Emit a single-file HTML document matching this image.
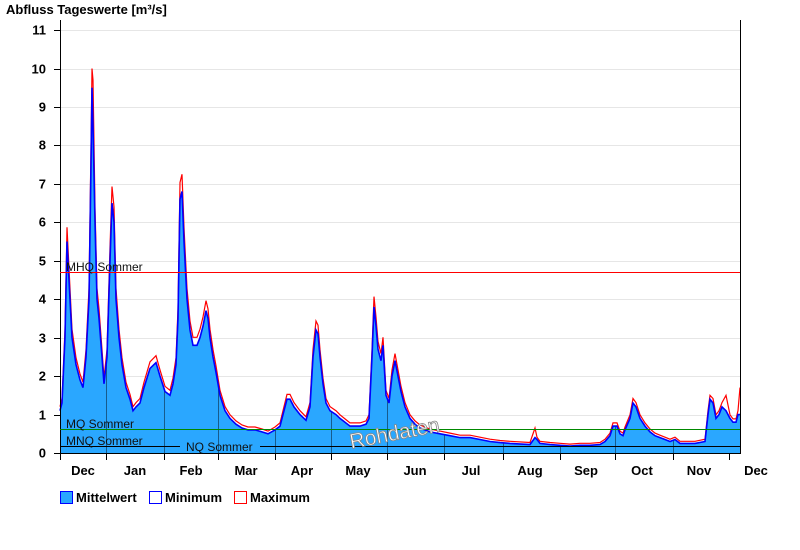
<!DOCTYPE html>
<html><head><meta charset="utf-8"><style>
html,body{margin:0;padding:0;background:#fff;width:800px;height:550px;overflow:hidden}
svg{display:block;font-family:"Liberation Sans",Arial,sans-serif}
</style></head><body>
<svg id="s" width="800" height="550" viewBox="0 0 800 550">
<defs><clipPath id="fc"><path id="fcp" d=""/></clipPath></defs>
<text x="6" y="14" font-size="13" font-weight="bold">Abfluss Tageswerte [m³/s]</text>
<g id="grid" stroke="#e6e6e6" stroke-width="1"></g>
<g id="data"></g>
<g stroke="#000" stroke-width="1" fill="none">
<line x1="60.5" y1="20" x2="60.5" y2="454"/>
<line x1="740.5" y1="20" x2="740.5" y2="454"/>
<line x1="60" y1="453.5" x2="741" y2="453.5"/>
</g>
<g id="ticks" stroke="#000"></g>
<g font-size="13" font-weight="bold" text-anchor="end" id="ylab"></g>
<g font-size="13" font-weight="bold" text-anchor="middle">
<text x="83" y="475">Dec</text><text x="135" y="475">Jan</text><text x="191" y="475">Feb</text><text x="246" y="475">Mar</text><text x="302" y="475">Apr</text><text x="358" y="475">May</text><text x="415" y="475">Jun</text><text x="471" y="475">Jul</text><text x="530" y="475">Aug</text><text x="586" y="475">Sep</text><text x="642" y="475">Oct</text><text x="699" y="475">Nov</text><text x="756" y="475">Dec</text>
</g>
<line x1="60" y1="272.5" x2="740" y2="272.5" stroke="#f00"/>
<line x1="60" y1="429.5" x2="740" y2="429.5" stroke="#080"/>
<line x1="60" y1="446.5" x2="180" y2="446.5" stroke="#000"/>
<line x1="260" y1="446.5" x2="740" y2="446.5" stroke="#000"/>
<g font-size="12" fill="#111">
<text x="66" y="271">MHQ Sommer</text>
<text x="66" y="428">MQ Sommer</text>
<text x="66" y="445">MNQ Sommer</text>
<text x="186" y="451">NQ Sommer</text>
</g>
<text x="348" y="440" font-size="21" fill="#fff" stroke="#888" stroke-width="0.8" transform="rotate(-11 395 428)">Rohdaten</text>
<g font-size="13" font-weight="bold">
<rect x="60.5" y="491.5" width="12" height="12" fill="#2aa7ff" stroke="#00f"/>
<text x="76" y="502">Mittelwert</text>
<rect x="149.5" y="491.5" width="12" height="12" fill="#fff" stroke="#00f"/>
<text x="165" y="502">Minimum</text>
<rect x="234.5" y="491.5" width="12" height="12" fill="#fff" stroke="#f00"/>
<text x="250" y="502">Maximum</text>
</g>
</svg>
<script>
var NS="http://www.w3.org/2000/svg";
function el(p,t,a,txt){var e=document.createElementNS(NS,t);for(var k in a)e.setAttribute(k,a[k]);if(txt)e.textContent=txt;document.getElementById(p).appendChild(e);return e;}
function Y(v){return 453-v*38.45;}
for(var i=1;i<=11;i++){var y=Math.round(Y(i))+0.5;el("grid","line",{x1:61,y1:y,x2:740,y2:y});}
for(var i=0;i<=11;i++){var y=Math.round(Y(i))+0.5;el("ticks","line",{x1:54,y1:y,x2:60,y2:y});el("ylab","text",{x:46,y:y+4},""+i);}
var mt=[60,106,164,218,275,331,387,444,503,560,615,673,729];
mt.forEach(function(x){el("ticks","line",{x1:x+.5,y1:453,x2:x+.5,y2:460});});
var p=[60,1.1,62,1.3,65,3,67,5.5,69,4.5,72,3,76,2.3,80,1.9,83,1.7,86,2.5,89,4,91,7.5,92,9.5,93,8.5,95,6,97,4,99,3.5,102,2.5,104,1.8,107,2.5,110,5,112,6.5,114,6,116,4,119,3,122,2.3,126,1.7,130,1.4,133,1.1,136,1.2,140,1.3,144,1.7,150,2.2,156,2.35,160,2,165,1.6,170,1.5,173,1.8,176,2.3,178,3.5,180,6.6,182,6.8,184,5.5,187,4,190,3.2,193,2.8,197,2.8,200,3,203,3.3,206,3.7,208,3.5,210,3,213,2.5,216,2.1,220,1.5,225,1.1,230,0.9,236,0.75,242,0.65,248,0.6,255,0.6,262,0.55,268,0.5,275,0.6,280,0.7,283,1,287,1.4,290,1.4,294,1.2,300,1.0,306,0.85,310,1.2,313,2.5,316,3.2,318,3.1,320,2.5,323,1.8,326,1.3,330,1.1,336,1.0,340,0.9,345,0.8,350,0.7,360,0.7,366,0.75,369,0.9,372,2.5,374,3.8,376,3.3,378,2.7,381,2.4,383,2.8,386,1.5,389,1.3,392,2,395,2.4,398,2,401,1.6,405,1.2,410,0.9,415,0.75,420,0.65,430,0.55,440,0.5,450,0.45,460,0.4,470,0.4,480,0.35,490,0.3,500,0.27,510,0.25,530,0.22,535,0.4,537,0.35,540,0.25,550,0.22,560,0.2,570,0.18,580,0.2,590,0.2,600,0.22,605,0.3,610,0.45,613,0.7,617,0.7,620,0.5,623,0.45,625,0.6,630,0.9,633,1.3,636,1.2,640,0.9,645,0.7,650,0.55,655,0.45,660,0.4,665,0.35,670,0.3,675,0.35,680,0.25,685,0.25,695,0.25,705,0.3,708,1.0,710,1.4,713,1.3,716,0.9,719,1.0,722,1.2,726,1.1,730,0.9,733,0.8,736,0.8,738,1.0,740,1.0];
var spikes={92:10,93:9.7,111:6.8,113:6.8,181:7.1,375:4.9,464:1.2,535:0.65,634:1.6,656:1.2,710:1.5,726:1.5,740:1.7,68:5.8};
var line="",red="",fill="M60,453";
for(var i=0;i<p.length;i+=2){var x=p[i],v=p[i+1];line+=(i?"L":"M")+x+","+Y(v).toFixed(1);fill+="L"+x+","+Y(v).toFixed(1);
var r=v*1.06+0.04;if(spikes[x])r=spikes[x];red+=(i?"L":"M")+x+","+Y(r).toFixed(1);}
fill+="L740,453Z";
document.getElementById("fcp").setAttribute("d",fill);
el("data","path",{d:fill,fill:"#2aa7ff"});
var g=el("data","g",{"clip-path":"url(#fc)"});
mt.slice(1,12).forEach(function(x){var l=document.createElementNS(NS,"line");l.setAttribute("x1",x+.5);l.setAttribute("x2",x+.5);l.setAttribute("y1",20);l.setAttribute("y2",453);l.setAttribute("stroke","#000");l.setAttribute("stroke-opacity","0.45");g.appendChild(l);});
el("data","path",{d:red,fill:"none",stroke:"#f00","stroke-width":1.2});
el("data","path",{d:line,fill:"none",stroke:"#00f","stroke-width":1.6});
</script>
</body></html>
